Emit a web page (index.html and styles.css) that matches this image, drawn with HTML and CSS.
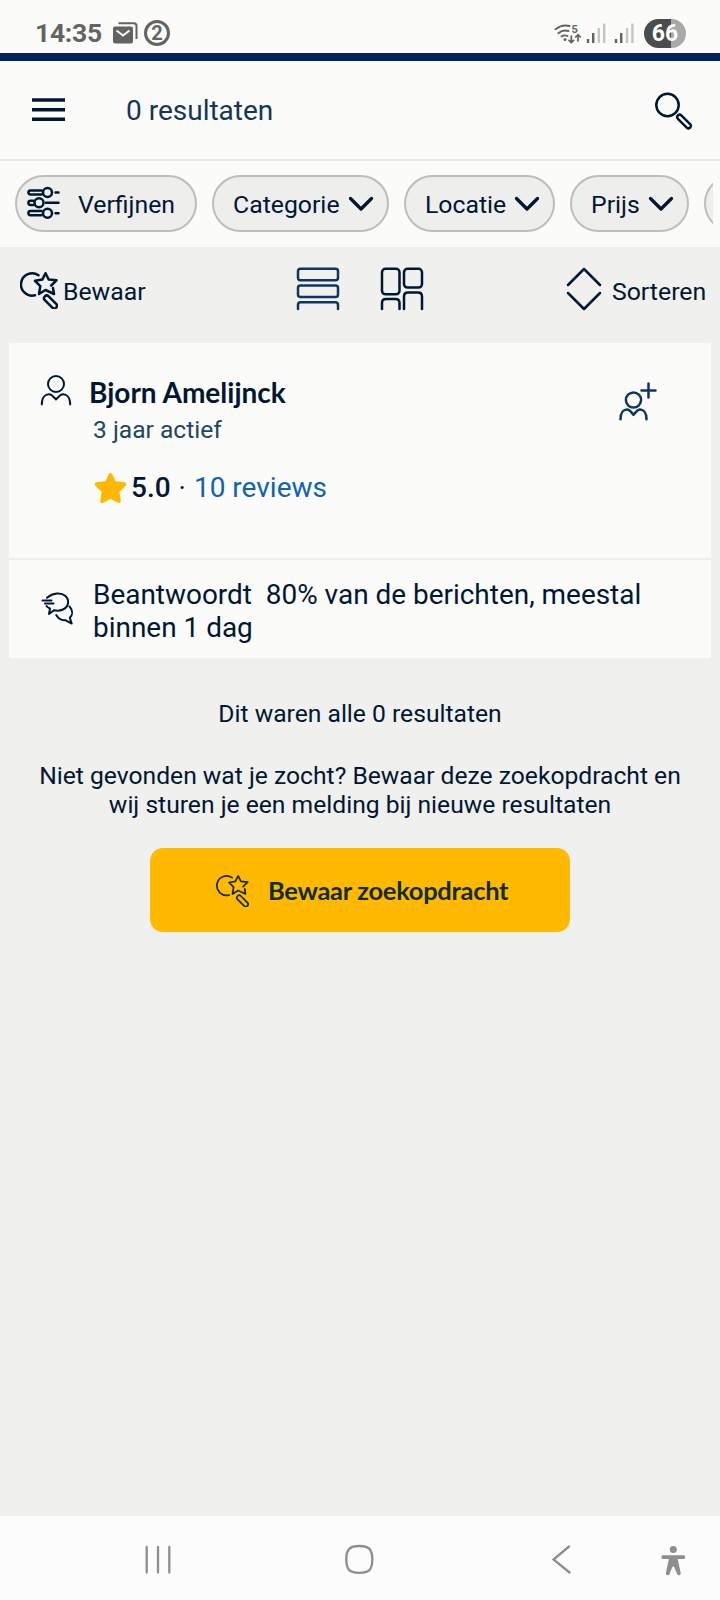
FILE: index.html
```html
<!DOCTYPE html>
<html lang="nl">
<head>
<meta charset="utf-8">
<title>0 resultaten</title>
<link rel="stylesheet" href="styles.css">
</head>
<body>
<svg class="defs" width="0" height="0">
  <symbol id="save-search" viewBox="0 0 38 38">
    <path d="M18.500 4.200A11.200 11.200 0 1 0 15 24.300M33 17l1 6-8.500-4-6.500 4 1.300-7.800-5.300-5.400 7.300-1.200L25.500 2.200l3.200 6.300 7.800.8-5.300 5.200"/>
    <rect x="-2.700" y="-8" width="5.400" height="16" rx="2.700" transform="translate(30.500 31) rotate(-45)"/>
  </symbol>
  <symbol id="chevron" viewBox="0 0 26 16"><path d="M2.500 2.500L13 13 23.500 2.500"/></symbol>
</svg>
<div class="screen">
  <div class="status">
    <span class="clock">14:35</span>
    <svg class="mail" width="25" height="23" viewBox="0 0 25 23"><path d="M5.500 1.300h15.300q2.700 0 2.700 2.700v13" fill="none" stroke="#636363" stroke-width="2"/><rect x="0" y="4.500" width="20" height="17" rx="2" fill="#636363"/><path d="M3.500 8.500l6.500 5 6.500-5" fill="none" stroke="#fbfcf9" stroke-width="2"/></svg>
    <span class="count">2</span>
    <svg class="signal" width="84" height="24" viewBox="0 0 84 24">
      <g fill="none" stroke="#636363" stroke-width="1.900" stroke-linecap="round">
        <path d="M1.500 6.200Q8 1.200 15.500 3M4.300 10.200Q9 6.300 14.500 8M7.500 13.500Q10.500 11.500 13.500 13"/>
        <path stroke-width="1.700" d="M17.300 13v6.500M15 17.300l2.300 2.300 2.300-2.300M24 18v-6M21.700 14l2.300-2.300 2.300 2.300"/></g>
      <circle cx="11" cy="16.500" r="1.500" fill="#636363"/>
      <text x="17.500" y="9.500" class="band">5</text>
      <g stroke="#636363" stroke-width="2.400"><path d="M34 16v4M39.200 10v10M62 16v4M67.200 10v10"/><path stroke="#c5c5c3" d="M44.800 5v15M50.200 0.500v19.500M73 5v15M78.400 .5v19.500"/></g>
    </svg>
    <span class="battery">66</span>
  </div>
  <header class="header">
    <svg width="33" height="24" viewBox="0 0 33 24"><path d="M0 2h33M0 11.700h33M0 21.300h33" stroke="#001733" stroke-width="3.600"/></svg>
    <h1 class="title">0 resultaten</h1>
    <svg class="line search" width="40" height="40" viewBox="0 0 40 40"><circle cx="13.500" cy="14" r="11.200"/><rect x="-2.400" y="-8.600" width="4.800" height="17.200" rx="2.400" transform="translate(30 30.500) rotate(-45)"/></svg>
  </header>
  <nav class="chips">
    <span class="chip refine"><svg class="line" width="32" height="32" viewBox="0 0 32 32"><path d="M14.500 3.400H3.500a1.800 1.800 0 0 0 0 4.200H14.500M28.500 5.500h3M6.500 13.700h-3a1.800 1.800 0 0 0 0 4.200h3M19 15.800h12.500M14.500 24H3.500a1.800 1.800 0 0 0 0 4.200H14.500M28.500 26.200h3"/><circle cx="20.500" cy="5.500" r="4.500"/><circle cx="12" cy="15.800" r="4.500"/><circle cx="20.500" cy="26.200" r="4.500"/></svg><b>Verfijnen</b></span>
    <span class="chip cat"><b>Categorie</b><svg class="chev"><use href="#chevron"/></svg></span>
    <span class="chip loc"><b>Locatie</b><svg class="chev"><use href="#chevron"/></svg></span>
    <span class="chip price"><b>Prijs</b><svg class="chev"><use href="#chevron"/></svg></span>
    <span class="chip more"></span>
  </nav>
  <div class="tools">
    <svg class="line save" width="38" height="38"><use href="#save-search"/></svg>
    <span class="save-label">Bewaar</span>
    <svg class="line blue list" width="44" height="44" viewBox="0 0 44 44"><rect x="2" y="1.800" width="40" height="11.500" rx="2.500"/><rect x="2" y="18.600" width="40" height="11.500" rx="2.500"/><path d="M2 42v-4q0-2.700 2.700-2.700h34.600q2.700 0 2.700 2.700v4"/></svg>
    <svg class="line grid" width="44" height="44" viewBox="0 0 44 44"><rect x="2" y="1.800" width="17.500" height="25.500" rx="3.500"/><rect x="24" y="1.800" width="18" height="18.800" rx="3.500"/><path d="M2 42v-6q0-4 4-4h9.500q4 0 4 4v6M24 42V29.500q0-4 4-4h10q4 0 4 4V42"/></svg>
    <svg class="line sort" width="34" height="44" viewBox="0 0 34 44"><path d="M1 18L17 2l16 16M1 26l16 16 16-16"/></svg>
    <span class="sort-label">Sorteren</span>
  </div>
  <section class="card">
    <div class="seller">
      <svg class="line thin user" width="32" height="32" viewBox="0 0 32 32"><circle cx="16" cy="10" r="8"/><path d="M1.800 30.500C1.800 23 5.500 20.300 9 20.300c3 0 4.500 2.700 7 5.200 2.500-2.500 4-5.200 7-5.200 3.500 0 7.200 2.700 7.200 10.200"/></svg>
      <div class="who">
        <h2 class="name">Bjorn Amelijnck</h2>
        <p class="since">3 jaar actief</p>
        <p class="rating"><svg width="33" height="33" viewBox="0 0 33 33"><path d="M16.500 4l3.800 8 10 1.300-7 7 1.500 9.700-8.300-4.200-8.300 4.200 1.500-9.700-7-7 10-1.300z" fill="#ffb700" stroke="#ffb700" stroke-width="4" stroke-linejoin="round"/></svg><b>5.0</b><i>·</i><a>10 reviews</a></p>
      </div>
      <svg class="line blue follow" width="38" height="38" viewBox="0 0 38 38"><circle cx="14.500" cy="18" r="7.600"/><path d="M1.500 37.200c0-7 3.400-9.600 6.500-9.600 2.700 0 4.200 2.700 6.500 5.200 2.300-2.500 3.800-5.200 6.500-5.200 3.100 0 6.500 2.600 6.500 9.600M22.500 8.500h14M29.500 1.500v14"/></svg>
    </div>
    <div class="response">
      <svg class="line thin chat" width="34" height="34" viewBox="0 0 34 34"><path d="M6 6.800C12 1.500 20 1.200 24.500 5c4.500 4.500 3 11-2.500 13.500-3 1.300-6.500 1.300-9 .7L8 23l1-5.500q-2.500-1-3.500-2.500M1.500 9.600h9M4 12.600h8.500M28.500 15.500c3.500 4 3.300 8.500.3 11.300l1.900 5.700-6.500-3.300c-4 .2-7-1.700-9-5.200"/></svg>
      <p class="answer">Beantwoordt&nbsp; 80% van de berichten, meestal<br>binnen 1 dag</p>
    </div>
  </section>
  <main class="end">
    <p class="all">Dit waren alle 0 resultaten</p>
    <p class="hint">Niet gevonden wat je zocht? Bewaar deze zoekopdracht en<br>wij sturen je een melding bij nieuwe resultaten</p>
    <button class="cta"><svg class="line thin" width="33" height="33"><use href="#save-search"/></svg><span>Bewaar zoekopdracht</span></button>
  </main>
  <footer class="system">
    <svg class="sys" width="720" height="84" viewBox="0 0 720 84"><path d="M146.700 31v25.500M158 31v25.500M169.300 31v25.500M569 30.500L553.500 43.500 569.500 56.500"/><path d="M359.300 30c9.500 0 13 3 13 13.500s-3.500 13.300-13 13.300-13-2.800-13-13.300 3.500-13.500 13-13.500z"/><g fill="#8e8e8e" stroke="none"><circle cx="673.300" cy="33.500" r="3.500"/><path d="M663 39.200h20.700q1.500 0 1.500 1.900t-1.500 1.900h-6l3 14q.2 2.200-1.700 2.200-1.500 0-2-1.500l-3-7.200h-1.400l-3 7.200q-.5 1.500-2 1.500-1.900 0-1.700-2.200l3-14H663q-1.600 0-1.600-1.900t1.600-1.900z"/></g></svg>
  </footer>
</div>
</body>
</html>
```
FILE: styles.css
```css
* { box-sizing: border-box; }
body, h1, h2, p { margin: 0; font-weight: 400; }
body { background: #f0f0ee; color: #001733; font-family: Roboto, sans-serif; white-space: nowrap; }
.defs { position: absolute; }
svg { flex: none; display: block; overflow: visible; }
.screen { width: 720px; height: 1600px; display: flex; flex-direction: column; overflow: hidden; }
.line { fill: none; stroke: #001733; stroke-width: 2.5; stroke-linecap: round; stroke-linejoin: round; }
.blue { stroke: #0e3760; }
.thin { stroke-width: 2; }

.status { height: 61px; background: #fbfcf9; border-bottom: 8px solid #00265b; display: flex; align-items: flex-start; color: #636363; padding-left: 35px; }
.clock { width: 78px; padding-top: 17px; font: 700 26.500px/32px Roboto, sans-serif; letter-spacing: -0.300px; }
.mail { margin-top: 22px; }
.count { width: 26px; height: 26px; margin: 20px 0 0 6px; border: 3px solid #636363; border-radius: 50%; font: 700 20px/21px Roboto, sans-serif; text-align: center; }
.signal { margin: 23px 0 0 384px; }
.band { font: 700 11px Roboto, sans-serif; fill: #636363; }
.battery { width: 42px; height: 29px; margin: 19px 0 0 6px; border-radius: 15px; background: linear-gradient(90deg, #4c4c4c 65%, #a9a9a9 65%); color: #fff; font: 700 23px/29px Roboto, sans-serif; text-align: center; }

.header { height: 100px; background: #fbfcf9; border-bottom: 2px solid #e7e8e6; display: flex; align-items: center; padding: 1px 26px 0 32px; }
.header > svg:first-child { margin-top: -1px; }
.title { margin: 0 0 0 61px; font-size: 28px; color: #173657; }
.search { margin: 0 0 0 auto; }

.chips { height: 86px; background: #fbfcf9; display: flex; gap: 15px; width: 720px; padding: 14px 0 0 15px; overflow: hidden; border-right: 7px solid #fbfcf9; }
.chip { flex: none; height: 57px; border: 2px solid #bdbebc; border-radius: 29px; background: #eeeeed; display: flex; align-items: center; font-size: 24.800px; }
.chip b { font-weight: 400; margin-top: 2px; }
.refine { width: 182px; padding-left: 10px; }
.refine svg { margin-top: -1px; }
.refine b { margin-left: 19px; }
.cat { width: 177px; }
.loc { width: 151px; }
.price { width: 119px; }
.more { width: 120px; }
.cat, .loc, .price { padding: 0 13px 0 19px; justify-content: space-between; }
.chev { width: 26px; height: 16px; fill: none; stroke: #001733; stroke-width: 3.300; stroke-linecap: round; stroke-linejoin: round; }

.tools { height: 96px; display: flex; align-items: flex-start; padding: 20px 0 0 20px; font-size: 24.800px; line-height: 28px; }
.save { margin-top: 4px; }
.save-label { margin: 11px 0 0 5px; width: 233px; }
.grid { margin-left: 40px; }
.sort { margin-left: 143px; }
.sort-label { margin: 11px 0 0 11px; }

.card { width: 702px; height: 315px; margin-left: 9px; background: #fbfcf9; }
.seller { height: 217px; border-bottom: 2px solid #eeeeec; display: flex; padding-left: 31px; }
.user { margin-top: 31px; }
.who { width: 547px; padding: 32px 0 0 17px; }
.name { font: 700 28px/34px Lato, sans-serif; }
.since { margin: 7px 0 0 4px; font-size: 24.600px; line-height: 28px; color: #234660; }
.rating { display: flex; margin: 27px 0 0 5px; font-size: 28px; line-height: 33px; }
.rating b { font-weight: 500; margin-left: 4px; }
.rating i { font-style: normal; margin: 0 8px; }
.rating a { color: #1263ad; }
.follow { margin-top: 39px; }
.response { display: flex; padding: 18px 0 0 32px; }
.chat { margin-top: 13px; }
.answer { margin-left: 18px; font-size: 27.950px; line-height: 33px; }

.end { flex: 1; display: flex; flex-direction: column; align-items: center; font-size: 24.650px; line-height: 29px; text-align: center; }
.all { margin-top: 41px; }
.hint { margin-top: 33px; }
.cta { width: 420px; height: 84px; margin-top: 29px; border: 0; border-radius: 13px; background: #ffba00; display: flex; align-items: center; padding: 0 0 0 66px; gap: 19px; font: 700 25.500px/30px Lato, sans-serif; letter-spacing: -0.300px; color: #142b2b; }
.cta .line { stroke: #142b2b; }
.system { height: 84px; background: #fcfcfc; }
.sys { fill: none; stroke: #8e8e8e; stroke-width: 2.300; stroke-linecap: round; }
```
